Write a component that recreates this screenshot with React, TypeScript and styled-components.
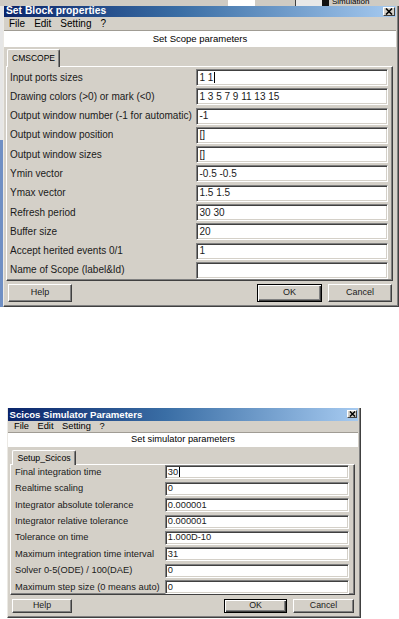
import React from 'react';
import styled, { createGlobalStyle } from 'styled-components';

const Global = createGlobalStyle`
  html, body { margin: 0; padding: 0; background: #ffffff; }
  body { font-family: "Liberation Sans", Arial, sans-serif; }
  * { box-sizing: border-box; }
`;

type Metrics = {
  width: number;
  left: number;
  titleH: number;
  titleFont: number;
  titlePadL: number;
  closeW: number;
  closeH: number;
  menuH: number;
  menuFont: number;
  menuPadL: number;
  menuGap: number;
  headerH: number;
  headerFont: number;
  tabTop: number;
  tabH: number;
  tabW: number;
  tabL: number;
  tabFont: number;
  panelL: number;
  panelR: number;
  panelPadT: number;
  panelPadB: number;
  labelW: number;
  labelPadL: number;
  inputW: number;
  inputH: number;
  rowGap: number;
  font: number;
  fieldPadL: number;
  btnTop: number;
  btnH: number;
  btnX: number;
  helpW: number;
  okW: number;
  cancelW: number;
  btnGap: number;
  btnFont: number;
  padBottom: number;
};

const TOP: Metrics = {
  width: 396, left: 0,
  titleH: 11, titleFont: 10.3, titlePadL: 2, closeW: 12, closeH: 9,
  menuH: 13, menuFont: 10, menuPadL: 5, menuGap: 9,
  headerH: 17, headerFont: 9.5,
  tabTop: 2, tabH: 17, tabW: 53, tabL: 3, tabFont: 8.5,
  panelL: 2, panelR: 3, panelPadT: 2, panelPadB: 1,
  labelW: 189, labelPadL: 3, inputW: 192, inputH: 17, rowGap: 2.3, font: 10, fieldPadL: 2.5,
  btnTop: 3, btnH: 18, btnX: 4, helpW: 64, okW: 65, cancelW: 64, btnGap: 6, btnFont: 9,
  padBottom: 4,
};

const BOTTOM: Metrics = {
  width: 354, left: 7,
  titleH: 13, titleFont: 9.6, titlePadL: 1.5, closeW: 10, closeH: 8,
  menuH: 11, menuFont: 9.3, menuPadL: 6, menuGap: 8.5,
  headerH: 15, headerFont: 9.3,
  tabTop: 3, tabH: 14, tabW: 64, tabL: 4, tabFont: 8.7,
  panelL: 2, panelR: 3, panelPadT: 0.5, panelPadB: 0,
  labelW: 154, labelPadL: 4, inputW: 184, inputH: 14, rowGap: 2.4, font: 9.3, fieldPadL: 1.8,
  btnTop: 3.5, btnH: 14, btnX: 4, helpW: 60, okW: 63, cancelW: 61, btnGap: 6, btnFont: 8.8,
  padBottom: 4,
};

const Page = styled.div`
  width: 399px;
  height: 619px;
  overflow: hidden;
  background: #ffffff;
  display: flex;
  flex-direction: column;
`;

const BackStrip = styled.div`
  height: 6px;
  flex: none;
  display: flex;
  align-items: stretch;
  background: #cfcbc3;
  overflow: hidden;
`;

const StripPiece = styled.div<{ $w: number; $c: string }>`
  width: ${(p) => p.$w}px;
  flex: none;
  background: ${(p) => p.$c};
`;

const StripLabel = styled.div`
  flex: none;
  font-size: 8px;
  line-height: 8px;
  margin-top: -2px;
  padding-left: 3px;
  color: #000;
  white-space: nowrap;
`;

const TopRow = styled.div`
  display: flex;
  flex: none;
`;

const SideEdge = styled.div`
  width: 3px;
  flex: none;
  display: flex;
  flex-direction: column;
`;

const SideTop = styled.div`
  height: 134px;
  background: #e6e6e6;
`;

const SideBlue = styled.div`
  flex: 1;
  background: #6f8fc4;
`;

const Gap = styled.div`
  height: 101px;
  flex: none;
`;

const Window = styled.div<{ $m: Metrics }>`
  width: ${(p) => p.$m.width}px;
  margin-left: ${(p) => p.$m.left}px;
  flex: none;
  background: #d4d0c8;
  border-left: 1px solid #ebe9e4;
  border-right: 1px solid #404040;
  border-bottom: 1px solid #404040;
  box-shadow: inset -1px -1px 0 #808080;
  padding: 0 2px ${(p) => p.$m.padBottom}px 0;
  display: flex;
  flex-direction: column;
  font-family: "Liberation Sans", Arial, sans-serif;
  color: #000;
`;

const TitleBar = styled.div<{ $m: Metrics }>`
  height: ${(p) => p.$m.titleH}px;
  display: flex;
  align-items: center;
  justify-content: space-between;
  background: linear-gradient(to right, #0a246a 0%, #3a6ea5 45%, #a6caf0 100%);
  padding-left: ${(p) => p.$m.titlePadL}px;
  padding-right: 1px;
  color: #ffffff;
  font-weight: bold;
  font-size: ${(p) => p.$m.titleFont}px;
  line-height: 1;
  white-space: nowrap;
`;

const CloseBox = styled.div<{ $w: number; $h: number }>`
  width: ${(p) => p.$w}px;
  height: ${(p) => p.$h}px;
  background: #d4d0c8;
  border: 1px solid;
  border-color: #ffffff #404040 #404040 #ffffff;
  display: flex;
  align-items: center;
  justify-content: center;
`;

const MenuBar = styled.div<{ $m: Metrics }>`
  height: ${(p) => p.$m.menuH}px;
  display: flex;
  align-items: center;
  gap: ${(p) => p.$m.menuGap}px;
  padding-left: ${(p) => p.$m.menuPadL}px;
  font-size: ${(p) => p.$m.menuFont}px;
  line-height: 1;
`;

const MenuItem = styled.span`
  white-space: nowrap;
`;

const Header = styled.div<{ $m: Metrics }>`
  height: ${(p) => p.$m.headerH}px;
  border-top: 1px solid #a09c94;
  background: #ffffff;
  display: flex;
  align-items: center;
  justify-content: center;
  font-size: ${(p) => p.$m.headerFont}px;
  line-height: 1;
`;

const TabStrip = styled.div<{ $m: Metrics }>`
  display: flex;
  padding-top: ${(p) => p.$m.tabTop}px;
  padding-left: ${(p) => p.$m.tabL}px;
`;

const Tab = styled.div<{ $m: Metrics }>`
  width: ${(p) => p.$m.tabW}px;
  height: ${(p) => p.$m.tabH + 1}px;
  margin-bottom: -1px;
  position: relative;
  z-index: 1;
  background: #d4d0c8;
  border-top: 1px solid #ffffff;
  border-left: 1px solid #ffffff;
  border-right: 1px solid #404040;
  box-shadow: inset -1px 0 0 #808080;
  border-radius: 2px 2px 0 0;
  display: flex;
  align-items: center;
  justify-content: center;
  font-size: ${(p) => p.$m.tabFont}px;
  line-height: 1;
`;

const Panel = styled.div<{ $m: Metrics }>`
  margin-left: ${(p) => p.$m.panelL}px;
  margin-right: ${(p) => p.$m.panelR}px;
  border-top: 1px solid #ffffff;
  border-left: 1px solid #ffffff;
  border-right: 1px solid #404040;
  border-bottom: 1px solid #404040;
  box-shadow: inset -1px -1px 0 #808080;
  padding-top: ${(p) => p.$m.panelPadT}px;
  padding-bottom: ${(p) => p.$m.panelPadB}px;
  display: grid;
  grid-template-columns: ${(p) => p.$m.labelW}px ${(p) => p.$m.inputW}px;
  grid-auto-rows: ${(p) => p.$m.inputH}px;
  row-gap: ${(p) => p.$m.rowGap}px;
  align-items: center;
`;

const Label = styled.div<{ $m: Metrics }>`
  padding-left: ${(p) => p.$m.labelPadL}px;
  font-size: ${(p) => p.$m.font}px;
  line-height: 1;
  white-space: nowrap;
  color: #1a1a1a;
`;

const Field = styled.div<{ $m: Metrics }>`
  height: ${(p) => p.$m.inputH}px;
  background: #ffffff;
  border: 1px solid;
  border-color: #808080 #ffffff #ffffff #808080;
  box-shadow: inset 1px 1px 0 #404040, inset -1px -1px 0 #d4d0c8;
  padding-left: ${(p) => p.$m.fieldPadL}px;
  display: flex;
  align-items: center;
  font-size: ${(p) => p.$m.font}px;
  line-height: 1;
  white-space: nowrap;
  overflow: hidden;
  color: #1a1a1a;
`;

const Caret = styled.span<{ $h: number }>`
  display: inline-block;
  width: 0;
  height: ${(p) => p.$h}px;
  border-left: 1px solid #000;
  margin-left: 1px;
`;

const ButtonRow = styled.div<{ $m: Metrics }>`
  display: flex;
  margin-top: ${(p) => p.$m.btnTop}px;
  padding: 0 ${(p) => p.$m.btnX}px;
  gap: ${(p) => p.$m.btnGap}px;
`;

const Button = styled.div<{ $w: number; $h: number; $font: number; $default?: boolean; $push?: boolean }>`
  width: ${(p) => p.$w}px;
  height: ${(p) => p.$h}px;
  margin-left: ${(p) => (p.$push ? 'auto' : '0')};
  background: #d4d0c8;
  border: 1px solid;
  border-color: ${(p) => (p.$default ? '#000000' : '#ffffff #404040 #404040 #ffffff')};
  box-shadow: ${(p) =>
    p.$default
      ? 'inset 1px 1px 0 #ffffff, inset -1px -1px 0 #404040, inset -2px -2px 0 #808080'
      : 'inset -1px -1px 0 #808080'};
  display: flex;
  align-items: center;
  justify-content: center;
  font-size: ${(p) => p.$font}px;
  line-height: 1;
  color: #1a1a1a;
`;

type Row = { label: string; value: string; caret?: boolean };

const scopeRows: Row[] = [
  { label: 'Input ports sizes', value: '1 1', caret: true },
  { label: 'Drawing colors (>0) or mark (<0)', value: '1 3 5 7 9 11 13 15' },
  { label: 'Output window number (-1 for automatic)', value: '-1' },
  { label: 'Output window position', value: '[]' },
  { label: 'Output window sizes', value: '[]' },
  { label: 'Ymin vector', value: '-0.5 -0.5' },
  { label: 'Ymax vector', value: '1.5 1.5' },
  { label: 'Refresh period', value: '30 30' },
  { label: 'Buffer size', value: '20' },
  { label: 'Accept herited events 0/1', value: '1' },
  { label: 'Name of Scope (label&Id)', value: '' },
];

const simRows: Row[] = [
  { label: 'Final integration time', value: '30', caret: true },
  { label: 'Realtime scaling', value: '0' },
  { label: 'Integrator absolute tolerance', value: '0.000001' },
  { label: 'Integrator relative tolerance', value: '0.000001' },
  { label: 'Tolerance on time', value: '1.000D-10' },
  { label: 'Maximum integration time interval', value: '31' },
  { label: 'Solver 0-5(ODE) / 100(DAE)', value: '0' },
  { label: 'Maximum step size (0 means auto)', value: '0' },
];

const CloseIcon: React.FC<{ size: number }> = ({ size }) => (
  <svg width={size} height={size - 1} viewBox="0 0 8 7">
    <path d="M1 0.5 L7 6.5 M7 0.5 L1 6.5" stroke="#000" strokeWidth="1.6" fill="none" />
  </svg>
);

const Dialog: React.FC<{ m: Metrics; title: string; header: string; tab: string; rows: Row[] }> = ({
  m,
  title,
  header,
  tab,
  rows,
}) => (
  <Window $m={m}>
    <TitleBar $m={m}>
      <span>{title}</span>
      <CloseBox $w={m.closeW} $h={m.closeH}>
        <CloseIcon size={m.closeH - 1} />
      </CloseBox>
    </TitleBar>
    <MenuBar $m={m}>
      <MenuItem>File</MenuItem>
      <MenuItem>Edit</MenuItem>
      <MenuItem>Setting</MenuItem>
      <MenuItem>?</MenuItem>
    </MenuBar>
    <Header $m={m}>{header}</Header>
    <TabStrip $m={m}>
      <Tab $m={m}>{tab}</Tab>
    </TabStrip>
    <Panel $m={m}>
      {rows.map((r) => (
        <React.Fragment key={r.label}>
          <Label $m={m}>{r.label}</Label>
          <Field $m={m}>
            {r.value}
            {r.caret && <Caret $h={Math.round(m.font * 1.1)} />}
          </Field>
        </React.Fragment>
      ))}
    </Panel>
    <ButtonRow $m={m}>
      <Button $w={m.helpW} $h={m.btnH} $font={m.btnFont}>
        Help
      </Button>
      <Button $w={m.okW} $h={m.btnH} $font={m.btnFont} $default $push>
        OK
      </Button>
      <Button $w={m.cancelW} $h={m.btnH} $font={m.btnFont}>
        Cancel
      </Button>
    </ButtonRow>
  </Window>
);

export default function App() {
  return (
    <>
      <Global />
      <Page>
        <BackStrip>
          <StripPiece $w={228} $c="#cfcbc3" />
          <StripPiece $w={27} $c="#ffffff" />
          <StripPiece $w={40} $c="#cfcbc3" />
          <StripPiece $w={1} $c="#404040" />
          <StripPiece $w={26} $c="#e8e8e8" />
          <StripPiece $w={7} $c="#111111" />
          <StripLabel>Simulation</StripLabel>
        </BackStrip>
        <TopRow>
          <SideEdge>
            <SideTop />
            <SideBlue />
          </SideEdge>
          <Dialog m={TOP} title="Set Block properties" header="Set Scope parameters" tab="CMSCOPE" rows={scopeRows} />
        </TopRow>
        <Gap />
        <Dialog
          m={BOTTOM}
          title="Scicos Simulator Parameters"
          header="Set simulator parameters"
          tab="Setup_Scicos"
          rows={simRows}
        />
      </Page>
    </>
  );
}
